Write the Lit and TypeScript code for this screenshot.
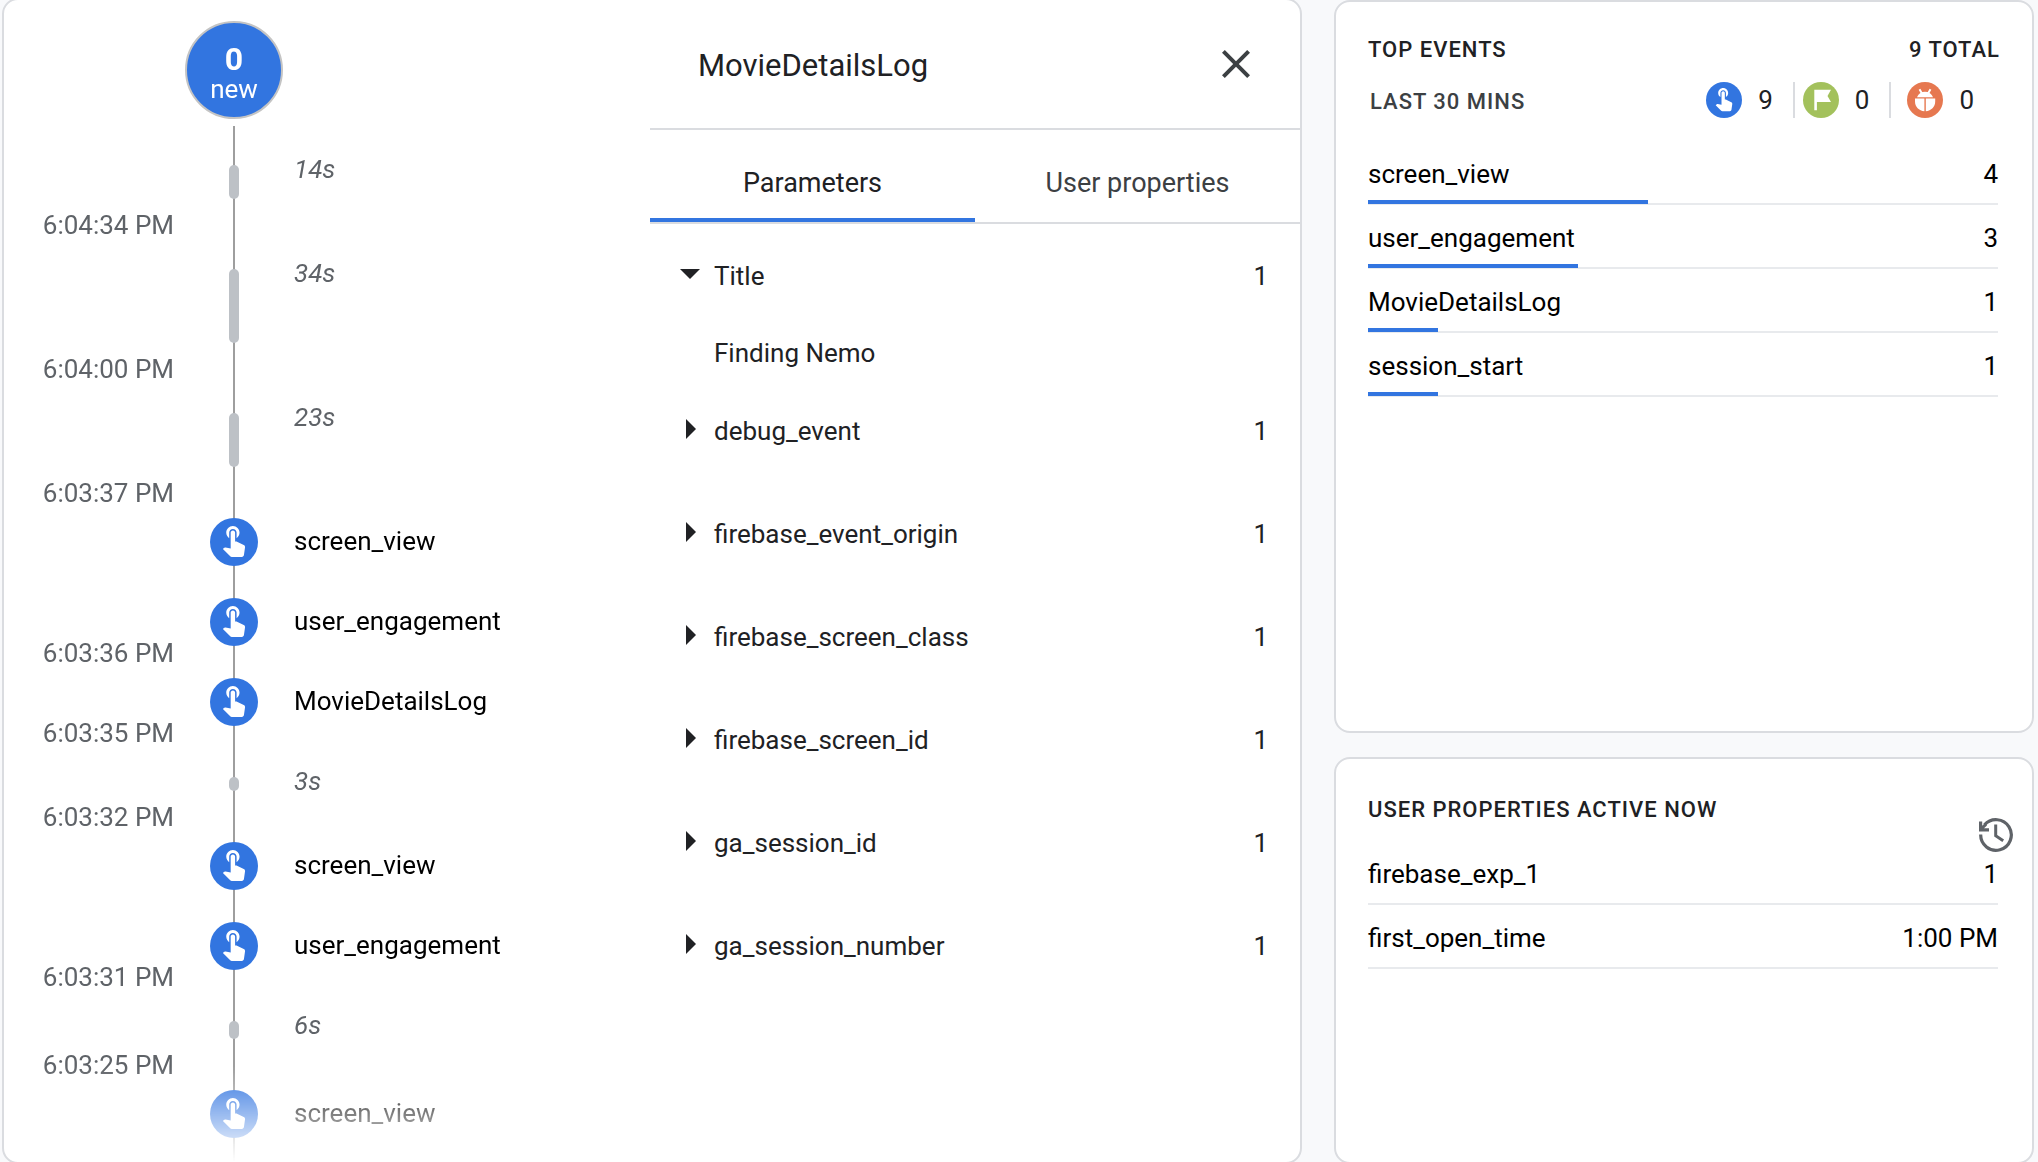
import { LitElement, html, css, svg, nothing } from "lit";
import { customElement, state } from "lit/decorators.js";
import { classMap } from "lit/directives/class-map.js";
import { styleMap } from "lit/directives/style-map.js";

type TimelineRow =
  | { kind: "gap"; seconds: number; bar: number; time: string }
  | { kind: "event"; name: string; time?: string };

const TIMELINE: TimelineRow[] = [
  { kind: "gap", seconds: 14, bar: 34, time: "6:04:34 PM" },
  { kind: "gap", seconds: 34, bar: 74, time: "6:04:00 PM" },
  { kind: "gap", seconds: 23, bar: 54, time: "6:03:37 PM" },
  { kind: "event", name: "screen_view" },
  { kind: "event", name: "user_engagement", time: "6:03:36 PM" },
  { kind: "event", name: "MovieDetailsLog", time: "6:03:35 PM" },
  { kind: "gap", seconds: 3, bar: 14, time: "6:03:32 PM" },
  { kind: "event", name: "screen_view" },
  { kind: "event", name: "user_engagement", time: "6:03:31 PM" },
  { kind: "gap", seconds: 6, bar: 18, time: "6:03:25 PM" },
  { kind: "event", name: "screen_view" },
];

const PARAMETERS = [
  { name: "Title", count: 1, value: "Finding Nemo" },
  { name: "debug_event", count: 1 },
  { name: "firebase_event_origin", count: 1 },
  { name: "firebase_screen_class", count: 1 },
  { name: "firebase_screen_id", count: 1 },
  { name: "ga_session_id", count: 1 },
  { name: "ga_session_number", count: 1 },
];

const TOP_EVENTS = [
  { name: "screen_view", count: 4 },
  { name: "user_engagement", count: 3 },
  { name: "MovieDetailsLog", count: 1 },
  { name: "session_start", count: 1 },
];
const TOTAL = 9;

const USER_PROPERTIES = [
  { name: "firebase_exp_1", value: "1" },
  { name: "first_open_time", value: "1:00 PM" },
];

const touchPath = svg`<path fill="#fff" d="M9 11.24V7.5C9 6.12 10.12 5 11.5 5S14 6.12 14 7.5v3.74c1.21-.81 2-2.18 2-3.74C16 5.01 13.99 3 11.5 3S7 5.01 7 7.5c0 1.56.79 2.93 2 3.74zm9.84 4.63l-4.54-2.26c-.17-.07-.35-.11-.54-.11H13v-6c0-.83-.67-1.5-1.5-1.5S10 6.67 10 7.5v10.74l-3.43-.72c-.08-.01-.15-.03-.24-.03-.31 0-.59.13-.79.33l-.79.8 4.94 4.94c.27.27.65.44 1.06.44h6.79c.75 0 1.33-.55 1.44-1.28l.75-5.27c.01-.07.02-.14.02-.2 0-.62-.38-1.16-.91-1.38z"/>`;

const touchIcon = html`<svg class="glyph" viewBox="-4 -2.4 32.5 32.5" aria-hidden="true">${touchPath}</svg>`;

const flagIcon = html`<svg class="glyph" viewBox="0 0 36 36" aria-hidden="true">
  <path fill="#fff" d="M11.300 7.700H28l-3.500 6.200L28 20H13.900v8.300h-2.600z"/>
</svg>`;

const bugIcon = html`<svg class="glyph" viewBox="0 0 36 36" aria-hidden="true">
  <path fill="none" stroke="#fff" stroke-width="2" d="M12.500 7.200l2.500 4.300M23.500 7.200l-2.500 4.300"/>
  <path fill="#fff" d="M10 15.300c1.200-3.500 4.200-5.500 8-5.500s6.800 2 8 5.500z"/>
  <path fill="#fff" d="M8 16.600h9.400v12.600C12 28.800 8 24.800 8 19.500zM18.800 16.600h9.400v2.900c0 5.300-4 9.300-9.400 9.700z"/>
</svg>`;

@customElement("app-root")
export class AppRoot extends LitElement {
  @state() private tab = "Parameters";
  @state() private open = new Set<string>(["Title"]);

  static styles = css`
    :host {
      display: block;
      font-family: Roboto, "Liberation Sans", sans-serif;
      font-size: 26px;
      line-height: 32px;
      color: #202124;
    }
    * { box-sizing: border-box; }
    h1, h2, h3, p, ol, ul { margin: 0; padding: 0; font-weight: 400; }
    ol, ul { list-style: none; }
    button {
      font: inherit;
      color: inherit;
      background: none;
      border: 0;
      padding: 0;
      cursor: pointer;
    }
    .page {
      display: grid;
      grid-template-columns: 1300fr 700fr;
      gap: 32px;
      min-height: 100vh;
      padding: 0 4px 0 2px;
      background: #f8f9fb;
      overflow: hidden;
    }
    .card {
      background: #fff;
      border: 2px solid #dadce0;
      border-radius: 16px;
    }
    .stream {
      display: grid;
      grid-template-columns: 646fr 650fr;
      margin: -2px 0;
    }
    .timeline {
      display: flex;
      flex-direction: column;
      padding-top: 21px;
      -webkit-mask-image: linear-gradient(#000 calc(100% - 96px), transparent);
      mask-image: linear-gradient(#000 calc(100% - 96px), transparent);
    }
    .latest {
      display: flex;
      flex-direction: column;
      align-items: center;
      justify-content: center;
      width: 98px;
      height: 98px;
      margin: 0 0 7px 181px;
      padding-top: 8px;
      border: 2px solid #c4c4c4;
      border-radius: 50%;
      background: #3275e0;
      color: #fff;
      line-height: 30px;
    }
    .latest strong { font-size: 32px; font-weight: 700; }
    .rail {
      flex: 1;
      padding-top: 4px;
      background: linear-gradient(#9e9e9e, #9e9e9e) 229px 0 / 2px 100% no-repeat;
    }
    .step {
      display: grid;
      grid-template-columns: 170px 120px 1fr;
      align-items: center;
    }
    .step time {
      align-self: end;
      justify-self: end;
      color: #5f6368;
      line-height: 18px;
    }
    .marker { display: flex; justify-content: center; }
    .label { padding-bottom: 2px; }
    .gap { min-height: 80px; }
    .gap .marker { padding: 35px 0; }
    .gap .label { align-self: start; padding-top: 23px; font-style: italic; color: #5f6368; }
    .bar { width: 10px; border-radius: 5px; background: #bdc1c6; }
    .event { height: 80px; color: #000; }
    .dot { display: flex; border-radius: 50%; background: #3275e0; }
    .event .dot { width: 48px; height: 48px; }
    .glyph { width: 100%; height: 100%; }

    .detail-head {
      display: flex;
      align-items: center;
      justify-content: space-between;
      height: 130px;
      padding: 0 40px 0 48px;
      border-bottom: 2px solid #dadce0;
    }
    .detail-head h2 { padding-top: 4px; font-size: 31px; line-height: 40px; }
    .close { width: 48px; height: 48px; }
    .close svg { display: block; width: 48px; height: 48px; }
    .tabs { display: flex; height: 94px; border-bottom: 2px solid #dadce0; }
    .tab {
      flex: 1;
      padding-top: 18px;
      border-bottom: 4px solid transparent;
      font-size: 27px;
      color: #3c4043;
    }
    .tab.active { border-color: #3275e0; color: #202124; }
    .param {
      display: grid;
      grid-template-columns: 36px 1fr auto;
      align-items: center;
      width: 100%;
      height: 103px;
      padding: 0 32px 0 28px;
      text-align: left;
    }
    .arrow { width: 24px; height: 24px; }
    .value { padding: 10px 64px; }

    .side {
      display: grid;
      grid-template-rows: 733fr 407fr;
      gap: 24px;
      margin-bottom: -2px;
    }
    .side .card { padding: 32px 34px 0 32px; }
    .line { display: flex; justify-content: space-between; align-items: center; }
    .caps { font-size: 22px; font-weight: 500; letter-spacing: 1px; }
    .total { margin-right: -2px; }
    .sub { height: 36px; margin: 16px 0 23px; }
    .muted { padding: 4px 0 0 2px; color: #3c4043; }
    .tallies { display: flex; align-items: center; }
    .tally { display: flex; align-items: center; height: 36px; padding-right: 20px; }
    .tally .dot { width: 36px; height: 36px; margin-right: 16px; }
    .tally + .tally { border-left: 2px solid #dadce0; padding-left: 8px; }
    .tally + .tally:last-child { padding-left: 16px; padding-right: 24px; }
    .flag { background: #a3c15c; }
    .bug { background: #e67850; }
    .rows { color: #000; }
    .rows li {
      display: flex;
      flex-direction: column;
      justify-content: flex-end;
      height: 64px;
      border-bottom: 2px solid #e8eaed;
    }
    .rows .line { height: 52px; }
    .meter { height: 4px; margin-bottom: -1px; background: #3275e0; }
    .rows .plain { padding-bottom: 6px; }
    .head {
      display: flex;
      justify-content: space-between;
      align-items: flex-start;
      height: 50px;
      padding-top: 3px;
    }
    .history { width: 34px; height: 34px; margin: 24px -15px 0 0; }
    .history svg { display: block; width: 34px; height: 34px; }
  `;

  private toggle(name: string) {
    const next = new Set(this.open);
    next.has(name) ? next.delete(name) : next.add(name);
    this.open = next;
  }

  private renderStep(row: TimelineRow) {
    return html`<li class=${classMap({ step: true, gap: row.kind === "gap", event: row.kind === "event" })}>
      ${row.time ? html`<time>${row.time}</time>` : html`<span></span>`}
      <span class="marker">
        ${row.kind === "gap"
          ? html`<span class="bar" style=${styleMap({ height: `${row.bar}px` })}></span>`
          : html`<span class="dot">${touchIcon}</span>`}
      </span>
      <span class="label">${row.kind === "gap" ? `${row.seconds}s` : row.name}</span>
    </li>`;
  }

  private renderParam(p: { name: string; count: number; value?: string }) {
    const open = this.open.has(p.name);
    return html`<li>
      <button class="param" aria-expanded=${open ? "true" : "false"} @click=${() => this.toggle(p.name)}>
        <svg class="arrow" viewBox="0 0 24 24" aria-hidden="true">
          <path fill="#202124" d=${open ? "M2 5h20L12 15z" : "M8 0v20l10-10z"} />
        </svg>
        <span>${p.name}</span>
        <span>${p.count}</span>
      </button>
      ${open && p.value ? html`<p class="value">${p.value}</p>` : nothing}
    </li>`;
  }

  render() {
    return html`<main class="page">
      <section class="card stream">
        <div class="timeline">
          <div class="latest"><strong>0</strong><span>new</span></div>
          <ol class="rail">${TIMELINE.map((r) => this.renderStep(r))}</ol>
        </div>
        <div class="detail">
          <header class="detail-head">
            <h2>MovieDetailsLog</h2>
            <button class="close" aria-label="Close">
              <svg viewBox="0 0 24 24" aria-hidden="true">
                <path fill="#3c4043" d="M19 6.410L17.590 5 12 10.590 6.410 5 5 6.410 10.590 12 5 17.590 6.410 19 12 13.410 17.590 19 19 17.590 13.410 12z"/>
              </svg>
            </button>
          </header>
          <div class="tabs" role="tablist">
            ${["Parameters", "User properties"].map(
              (t) => html`<button
                role="tab"
                class=${classMap({ tab: true, active: this.tab === t })}
                aria-selected=${this.tab === t ? "true" : "false"}
                @click=${() => (this.tab = t)}
              >${t}</button>`
            )}
          </div>
          <ul>${PARAMETERS.map((p) => this.renderParam(p))}</ul>
        </div>
      </section>
      <div class="side">
        <section class="card">
          <header class="line caps"><h3 class="caps">TOP EVENTS</h3><span class="total">${TOTAL} TOTAL</span></header>
          <div class="line sub">
            <span class="caps muted">LAST 30 MINS</span>
            <div class="tallies">
              <span class="tally"><span class="dot">${touchIcon}</span>9</span>
              <span class="tally"><span class="dot flag">${flagIcon}</span>0</span>
              <span class="tally"><span class="dot bug">${bugIcon}</span>0</span>
            </div>
          </div>
          <ul class="rows">
            ${TOP_EVENTS.map(
              (e) => html`<li>
                <div class="line"><span>${e.name}</span><span>${e.count}</span></div>
                <div class="meter" style=${styleMap({ width: `${(e.count / TOTAL) * 100}%` })}></div>
              </li>`
            )}
          </ul>
        </section>
        <section class="card">
          <header class="head">
            <h3 class="caps">USER PROPERTIES ACTIVE NOW</h3>
            <button class="history" aria-label="History">
              <svg viewBox="0 0 34 34" aria-hidden="true">
                <path fill="none" stroke="#5f6368" stroke-width="3.200" d="M1.700 16.500A15.300 15.300 0 1 0 5.500 6.900"/>
                <path fill="#5f6368" d="M0 3.500h3.200v4.300l2.600-2.600 2.200 2.200-3 2.900h5v3.200H0z"/>
                <path fill="none" stroke="#5f6368" stroke-width="3" d="M16.700 6.500v11.200l7.500 5"/>
              </svg>
            </button>
          </header>
          <ul class="rows">
            ${USER_PROPERTIES.map(
              (p) => html`<li><div class="line plain"><span>${p.name}</span><span>${p.value}</span></div></li>`
            )}
          </ul>
        </section>
      </div>
    </main>`;
  }
}
